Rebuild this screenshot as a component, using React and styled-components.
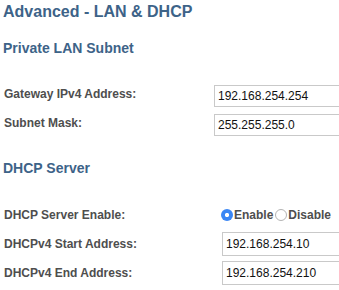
import React from "react";
import styled, { createGlobalStyle } from "styled-components";

const Global = createGlobalStyle`
  html, body {
    margin: 0;
    padding: 0;
    background: #fff;
    overflow: hidden;
  }
  body {
    font-family: "Liberation Sans", Arial, Helvetica, sans-serif;
  }
`;

const Page = styled.div`
  width: 339px;
  height: 290px;
  padding: 3px 0 0 3px;
  box-sizing: border-box;
  overflow: hidden;
`;

const Title = styled.h2`
  margin: 0;
  font-size: 16px;
  line-height: 18px;
  font-weight: bold;
  color: #3d6388;
`;

const SectionTitle = styled.h3`
  margin: ${(p) => p.$top}px 0 0;
  font-size: 14px;
  line-height: 16px;
  font-weight: bold;
  color: #3d6388;
`;

const Form = styled.div`
  display: grid;
  grid-template-columns: ${(p) => p.$labelWidth}px 1fr;
  grid-auto-rows: ${(p) => p.$rowHeight}px;
  margin-top: ${(p) => p.$top}px;
  padding-left: 1px;
`;

const Label = styled.div`
  display: flex;
  align-items: center;
  padding-bottom: ${(p) => p.$lift || 0}px;
  font-size: 12px;
  font-weight: bold;
  color: #4e4e4e;
  white-space: nowrap;
`;

const Field = styled.div`
  display: flex;
  align-items: center;
  min-width: 0;
`;

const TextInput = styled.input`
  flex: none;
  width: 150px;
  height: ${(p) => p.$height || 22}px;
  box-sizing: border-box;
  padding: 0 3px;
  border: 1px solid #c9c9c9;
  border-radius: 0;
  font-family: "Liberation Sans", Arial, Helvetica, sans-serif;
  font-size: 12px;
  color: #111;
  background: #fff;
  outline: none;
`;

const RadioGroup = styled.div`
  display: flex;
  align-items: center;
  gap: 2px;
  margin-left: -1px;
`;

const RadioLabel = styled.label`
  display: flex;
  align-items: center;
  gap: 1px;
  font-size: 12px;
  font-weight: bold;
  color: #4e4e4e;
`;

const Radio = styled.input.attrs({ type: "radio" })`
  appearance: none;
  width: 12px;
  height: 12px;
  margin: 0;
  border-radius: 50%;
  box-sizing: border-box;
  border: 1px solid #b4b4b4;
  background: #fff;
  &:checked {
    border: none;
    background: radial-gradient(circle, #fff 0 1.8px, #3a86f4 2.4px);
  }
`;

function TextRow({ label, value, lift, height }) {
  return (
    <>
      <Label $lift={lift}>{label}</Label>
      <Field>
        <TextInput defaultValue={value} $height={height} />
      </Field>
    </>
  );
}

export default function App() {
  const [enabled, setEnabled] = React.useState(true);

  return (
    <Page>
      <Global />
      <Title>Advanced - LAN &amp; DHCP</Title>

      <SectionTitle $top={19}>Private LAN Subnet</SectionTitle>
      <Form $labelWidth={210} $rowHeight={29} $top={25}>
        <TextRow label="Gateway IPv4 Address:" value="192.168.254.254" lift={4} />
        <TextRow label="Subnet Mask:" value="255.255.255.0" lift={4} />
      </Form>

      <SectionTitle $top={21}>DHCP Server</SectionTitle>
      <Form $labelWidth={218} $rowHeight={29} $top={24}>
        <Label>DHCP Server Enable:</Label>
        <Field>
          <RadioGroup>
            <RadioLabel>
              <Radio
                name="dhcp"
                checked={enabled}
                onChange={() => setEnabled(true)}
              />
              Enable
            </RadioLabel>
            <RadioLabel>
              <Radio
                name="dhcp"
                checked={!enabled}
                onChange={() => setEnabled(false)}
              />
              Disable
            </RadioLabel>
          </RadioGroup>
        </Field>
        <TextRow label="DHCPv4 Start Address:" value="192.168.254.10" height={24} />
        <TextRow label="DHCPv4 End Address:" value="192.168.254.210" height={24} />
      </Form>
    </Page>
  );
}
